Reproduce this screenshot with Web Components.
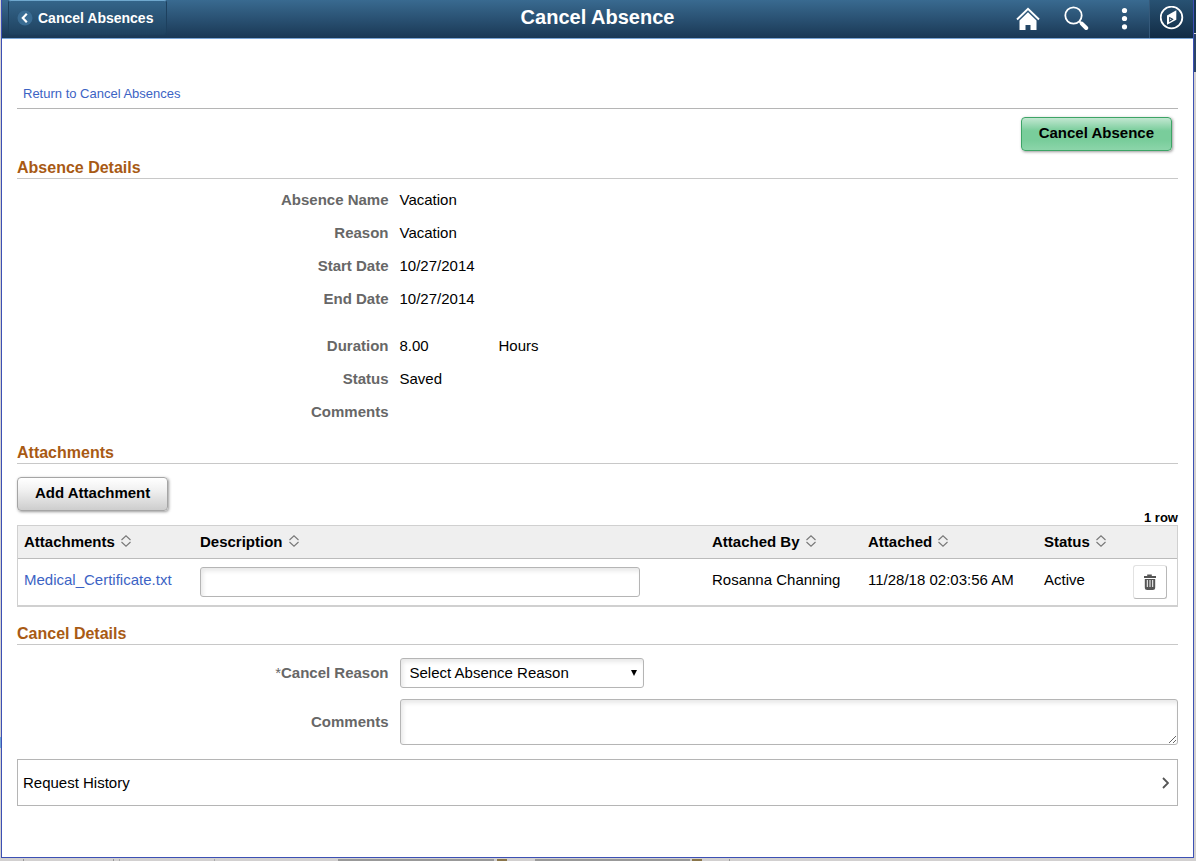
<!DOCTYPE html>
<html lang="en">
<head>
<meta charset="utf-8">
<title>Cancel Absence</title>
<style>
  html { height: 100%; }
  body { margin: 0; min-height: 100%; display: flex; font: 15px/18px "Liberation Sans", Arial, sans-serif; color: #000; background: #d2d0d0; }
</style>
</head>
<body>
<absence-app></absence-app>

<script>
const define = (name, html, setup) => {
  const template = document.createElement('template');
  template.innerHTML = html;
  customElements.define(name, class extends HTMLElement {
    constructor() {
      super();
      this.attachShadow({ mode: 'open' }).append(template.content.cloneNode(true));
    }
    connectedCallback() { if (setup) setup(this, this.shadowRoot); }
  });
};

define('page-header', `
<style>
  :host { display: grid; grid-template-columns: 1fr auto 1fr; height: 38px; border-bottom: 1px solid #7aa5d6; background: linear-gradient(#396a90, #1a3855); color: #fff; }
  .back { justify-self: start; display: flex; align-items: center; gap: 5px; height: 35px; margin-left: 6px; padding: 0 13px 0 8px; border: 1px solid #1d405e; border-top-color: #6fa8ce; border-radius: 3px; background: linear-gradient(#34658a, #1f4260); color: #fff; font: bold 14px/18px "Liberation Sans", Arial, sans-serif; box-sizing: border-box; }
  h1 { margin: 0; font-size: 20px; line-height: 34px; }
  nav { justify-self: end; display: flex; }
  nav button { display: flex; justify-content: center; align-items: flex-start; width: 48px; padding: 6px 3px 0 0; border: 0; background: none; color: #fff; }
  nav button.bar { width: 44px; padding-right: 0; border-left: 1px solid #35597a; background: linear-gradient(#285273, #122c45); }
  svg { display: block; }
</style>
<button class="back"><svg width="16" height="16" viewBox="0 0 16 16"><circle cx="8" cy="8" r="7.5" fill="#3a6c93"/><path d="M9.8 3.8 5.8 8l4 4.2" fill="none" stroke="#fff" stroke-width="2.2"/></svg>Cancel Absences</button>
<h1><slot></slot></h1>
<nav>
  <button aria-label="Home"><svg width="26" height="26" viewBox="0 0 26 26"><path d="M2 13.500 13 2.800l11 10.700" fill="none" stroke="#fff" stroke-width="2"/><path d="M13 6.300l8.500 8.200v9.600H15.500v-5h-5v5H4.500V14.500z" fill="#fff"/></svg></button>
  <button aria-label="Search"><svg width="26" height="26" viewBox="0 0 26 26"><circle cx="10.500" cy="9.500" r="8.200" fill="none" stroke="#fff" stroke-width="1.800"/><path d="m16.500 15.500 2.500 2.500" stroke="#fff" stroke-width="2"/><path d="m18.800 17.600 4.400 4.400" stroke="#fff" stroke-width="4" stroke-linecap="round"/></svg></button>
  <button aria-label="Actions"><svg width="26" height="26" viewBox="0 0 26 26" fill="#fff"><circle cx="13.500" cy="4.500" r="2.600"/><circle cx="13.500" cy="12.500" r="2.600"/><circle cx="13.500" cy="20.800" r="2.600"/></svg></button>
  <button class="bar" aria-label="Navigation bar"><svg width="24" height="24" viewBox="0 0 24 24"><circle cx="11.500" cy="11.500" r="10.800" fill="none" stroke="#fff" stroke-width="1.800"/><path d="m16.300 4.300v9.400L7 18.800V9.400z" fill="#fff"/><path d="m9.200 10.800 4.500 2.400-4.500 3z" fill="#173650"/><path d="m10.200 12.600 1.500.7-1.500.9z" fill="#fff"/></svg></button>
</nav>`);

define('fluid-button', `
<style>
  :host { display: inline-block; }
  button { display: block; height: 34px; padding: 0 17px 2px; border: 1px solid #a5a5a5; border-radius: 4px; background: linear-gradient(#fff, #f2f2f2 35%, #cdcdcd); box-shadow: 1px 1px 3px #999; color: #000; font: bold 15px/18px "Liberation Sans", Arial, sans-serif; }
  :host([primary]) button { border-color: #3da466; background: linear-gradient(#c2e7d1, #79cd9b 40%, #79cd9b 70%, #8cd5aa); }
</style>
<button><slot></slot></button>`);

define('section-title', `
<style>
  :host { display: block; border-bottom: 1px solid #c8c8c8; color: #a85a14; }
  h2 { margin: 0; padding-bottom: 1px; font-size: 16px; line-height: 18px; }
</style>
<h2><slot></slot></h2>`);

define('detail-row', `
<style>
  :host { display: grid; grid-template-columns: 32% 99px 1fr; line-height: 33px; }
  .label { text-align: right; font-weight: bold; color: #676767; }
  .value { padding-left: 11px; white-space: nowrap; }
</style>
<span class="label"></span><span class="value"><slot></slot></span><span class="value"><slot name="unit"></slot></span>`,
(host, root) => { root.querySelector('.label').textContent = host.getAttribute('label'); });

define('sort-button', `
<style>
  :host { display: block; }
  button { display: flex; align-items: center; gap: 6px; padding: 0; border: 0; background: none; color: #000; font: bold 15px/18px "Liberation Sans", Arial, sans-serif; white-space: nowrap; }
  svg { margin-bottom: 2px; }
</style>
<button><slot></slot><svg width="10" height="12" viewBox="0 0 10 12" fill="none" stroke="#777" stroke-width="1.100"><path d="M.500 5 5 .800 9.500 5M.500 7 5 11.200 9.500 7"/></svg></button>`);

define('attachment-grid', `
<style>
  :host { display: block; }
  .count { text-align: right; font-weight: bold; font-size: 13px; line-height: 14px; }
  table { width: 100%; table-layout: fixed; border-collapse: separate; border-spacing: 0; border: 1px solid #d0d0d0; border-bottom-width: 2px; }
  th, td { padding: 0 0 0 6px; text-align: left; vertical-align: top; }
  th { height: 32px; vertical-align: middle; background: #efefef; border-bottom: 1px solid #bbb; }
  td { height: 46px; white-space: nowrap; }
  p { margin: 12px 0 0; }
  a { color: #3c63c4; text-decoration: none; }
  input { display: block; width: 440px; max-width: 90%; height: 30px; margin-top: 8px; box-sizing: border-box; border: 1px solid #b5b5b5; border-radius: 3px; box-shadow: inset 2px 3px 4px #e8e8e8; font: inherit; }
  button { display: flex; align-items: center; justify-content: center; width: 34px; height: 34px; margin: 6px 0 0 1px; padding: 0; border: 1px solid #e2e2e2; border-right-color: #b8b8b8; border-bottom-color: #b8b8b8; border-radius: 3px; background: #fff; }
  .a { width: 176px; } .b { width: auto; } .c { width: 156px; } .d { width: 176px; } .e { width: 88px; } .f { width: 51px; }
</style>
<div class="count">1 row</div>
<table>
  <colgroup><col class="a"><col class="b"><col class="c"><col class="d"><col class="e"><col class="f"></colgroup>
  <thead><tr><th><sort-button>Attachments</sort-button></th><th><sort-button>Description</sort-button></th><th><sort-button>Attached By</sort-button></th><th><sort-button>Attached</sort-button></th><th><sort-button>Status</sort-button></th><th></th></tr></thead>
  <tbody><tr>
    <td><p><a href="#attachment">Medical_Certificate.txt</a></p></td>
    <td><input type="text" aria-label="Description"></td>
    <td><p>Rosanna Channing</p></td>
    <td><p>11/28/18 02:03:56 AM</p></td>
    <td><p>Active</p></td>
    <td><button aria-label="Delete"><svg width="14" height="16" viewBox="0 0 14 16"><path d="M1 2h3.200V.500h4.600V2H13v2H1zM1.800 5h10.400v8.500a2.500 2.500 0 0 1-2.500 2.500H4.300a2.500 2.500 0 0 1-2.500-2.500z" fill="#555"/><path d="M4.300 6v7M7 6v7M9.700 6v7" stroke="#fff" stroke-width="1"/></svg></button></td>
  </tr></tbody>
</table>`);

define('cancel-form', `
<style>
  :host { display: grid; grid-template-columns: 32% 1fr; column-gap: 11px; row-gap: 11px; align-items: center; }
  label { text-align: right; font-weight: bold; color: #676767; }
  label span { font-weight: normal; }
  select, textarea { box-sizing: border-box; border: 1px solid #b5b5b5; border-radius: 3px; background-color: #fff; box-shadow: inset 2px 3px 4px #e8e8e8; color: #000; font: inherit; }
  .pick { display: grid; width: 244px; align-items: center; }
  .pick > * { grid-area: 1 / 1; }
  select { appearance: none; width: 100%; height: 30px; padding: 0 24px 0 9px; }
  svg { justify-self: end; margin-right: 6px; pointer-events: none; }
  textarea { display: block; width: 100%; height: 46px; resize: vertical; }
</style>
<label for="reason"><span>*</span>Cancel Reason</label>
<div class="pick"><select id="reason"><option>Select Absence Reason</option></select><svg width="8" height="8" viewBox="0 0 8 8"><path d="M1 1h6L4 7z"/></svg></div>
<label for="comments">Comments</label>
<textarea id="comments"></textarea>`);

define('disclosure-row', `
<style>
  :host { display: block; }
  button { display: flex; justify-content: space-between; align-items: center; width: 100%; height: 47px; padding: 0 8px 0 5px; border: 1px solid #b5b5b5; background: #fff; color: #000; font: inherit; }
</style>
<button><slot></slot><svg width="7" height="12" viewBox="0 0 7 12" fill="none" stroke="#555" stroke-width="1.800"><path d="m1 1 5 5-5 5"/></svg></button>`);

define('absence-app', `
<style>
  :host { flex: 1; min-width: 0; display: flex; flex-direction: column; padding: 0 2px 3px 1px; box-sizing: border-box;
    background:
      linear-gradient(#163550 0 33px, #ddd 33px 34px, #2b4468 34px 72px, transparent 72px) right top / 2px 100% no-repeat,
      linear-gradient(#6fa3d6, #6fa3d6) left 737px / 1px 11px no-repeat,
      linear-gradient(90deg, transparent 23px, #999 23px 24px, transparent 24px 113px, #999 113px 114px, transparent 114px 119px, #aaa 119px 120px, transparent 120px 214px, #aaa 214px 215px, transparent 215px 338px, #999 338px 494px, transparent 494px 497px, #8a754a 497px 507px, transparent 507px 535px, #999 535px 690px, transparent 690px 692px, #8a754a 692px 702px, transparent 702px 729px, #999 729px 730px, transparent 730px) left bottom / 100% 2px no-repeat,
      #d2d0d0; }
  .window { flex: 1; border: 1px solid #3c50b4; border-top: 0; background: #fff; }
  main { padding: 46px 15px 32px; }
  .return { display: flex; padding: 0 6px 5px; border-bottom: 1px solid #b5b5b5; font-size: 13px; }
  .return a { color: #3c63c4; text-decoration: none; }
  .actions { display: flex; justify-content: flex-end; padding: 8px 6px 8px; }
  .details { padding: 4px 0 16px; }
  .gap { margin-top: 14px; }
  .add { display: block; padding: 13px 0 0; }
  .cancel { margin-top: 18px; }
  cancel-form { margin: 13px 0 14px; }
</style>
<div class="window">
  <page-header>Cancel Absence</page-header>
  <main>
    <div class="return"><a href="#absences">Return to Cancel Absences</a></div>
    <div class="actions"><fluid-button primary>Cancel Absence</fluid-button></div>
    <section-title>Absence Details</section-title>
    <div class="details">
      <detail-row label="Absence Name">Vacation</detail-row>
      <detail-row label="Reason">Vacation</detail-row>
      <detail-row label="Start Date">10/27/2014</detail-row>
      <detail-row label="End Date">10/27/2014</detail-row>
      <detail-row class="gap" label="Duration">8.00<span slot="unit">Hours</span></detail-row>
      <detail-row label="Status">Saved</detail-row>
      <detail-row label="Comments"></detail-row>
    </div>
    <section-title>Attachments</section-title>
    <fluid-button class="add">Add Attachment</fluid-button>
    <attachment-grid></attachment-grid>
    <section-title class="cancel">Cancel Details</section-title>
    <cancel-form></cancel-form>
    <disclosure-row>Request History</disclosure-row>
  </main>
</div>`);
</script>
</body>
</html>
